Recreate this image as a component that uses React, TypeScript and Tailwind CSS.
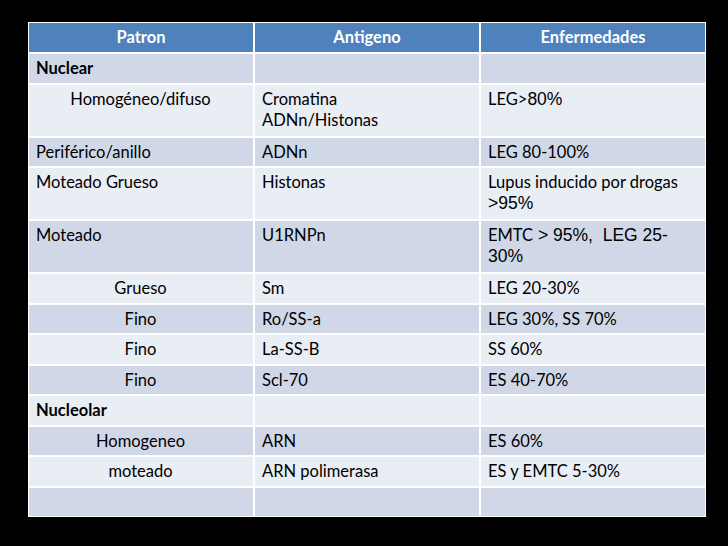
const dark = 'bg-[#d0d8e8]'
const light = 'bg-[#e9edf4]'

type Row = {
  patron: React.ReactNode
  antigeno: React.ReactNode
  enf: React.ReactNode
  center?: boolean
  bold?: boolean
  tall?: boolean
}

// the numbers typed in Arial on the original slide
const arial = 'font-["Liberation_Sans",Arial,sans-serif] text-[17.5px]'

const rows: Row[] = [
  { patron: 'Nuclear', antigeno: '', enf: '', bold: true },
  {
    patron: 'Homogéneo/difuso',
    antigeno: (
      <>
        Cromatina
        <br />
        ADNn/Histonas
      </>
    ),
    enf: (
      <>
        LEG&gt;<span className={arial}>80%</span>
      </>
    ),
    center: true,
    tall: true,
  },
  { patron: 'Periférico/anillo', antigeno: 'ADNn', enf: 'LEG 80-100%' },
  {
    patron: 'Moteado Grueso',
    antigeno: 'Histonas',
    enf: (
      <>
        Lupus inducido por drogas
        <br />
        <span className={arial}>&gt;95%</span>
      </>
    ),
    tall: true,
  },
  {
    patron: 'Moteado',
    antigeno: 'U1RNPn',
    enf: (
      <>
        EMTC<span className={arial}> &gt; 95%,&nbsp; LEG 25-</span>
        <br />
        <span className={arial}>30%</span>
      </>
    ),
    tall: true,
  },
  { patron: 'Grueso', antigeno: 'Sm', enf: 'LEG 20-30%', center: true },
  { patron: 'Fino', antigeno: 'Ro/SS-a', enf: 'LEG 30%, SS 70%', center: true },
  { patron: 'Fino', antigeno: 'La-SS-B', enf: 'SS 60%', center: true },
  { patron: 'Fino', antigeno: 'Scl-70', enf: 'ES 40-70%', center: true },
  { patron: 'Nucleolar', antigeno: '', enf: '', bold: true },
  { patron: 'Homogeneo', antigeno: 'ARN', enf: 'ES 60%', center: true },
  { patron: 'moteado', antigeno: 'ARN polimerasa', enf: 'ES y EMTC 5-30%', center: true },
  { patron: '', antigeno: '', enf: '' },
]

export default function App() {
  return (
    <div className="w-[728px] h-[546px] bg-black pt-[22px] pl-[28px] font-['Lato',sans-serif] text-[16.5px] text-black">
      <div className="w-[678px] bg-white p-[1px] flex flex-col gap-[2px]">
        <div className="grid grid-cols-3 gap-[2px] h-[29px]">
          {['Patron', 'Antigeno', 'Enfermedades'].map(h => (
            <div key={h} className="bg-[#4f81bd] text-white font-bold flex items-center justify-center">
              {h}
            </div>
          ))}
        </div>
        {rows.map((r, i) => {
          const bg = i % 2 === 0 ? dark : light
          const h = r.tall ? 'h-[51px]' : 'h-[28.5px]'
          return (
            <div key={i} className={`grid grid-cols-3 gap-[2px] ${h} leading-[21px]`}>
              <div className={`${bg} pl-[7px] pr-2 pt-[4px] ${r.center ? 'text-center' : ''} ${r.bold ? 'font-bold' : ''}`}>
                {r.patron}
              </div>
              <div className={`${bg} pl-[7px] pr-2 pt-[4px]`}>{r.antigeno}</div>
              <div className={`${bg} pl-[7px] pr-2 pt-[4px]`}>{r.enf}</div>
            </div>
          )
        })}
      </div>
    </div>
  )
}
